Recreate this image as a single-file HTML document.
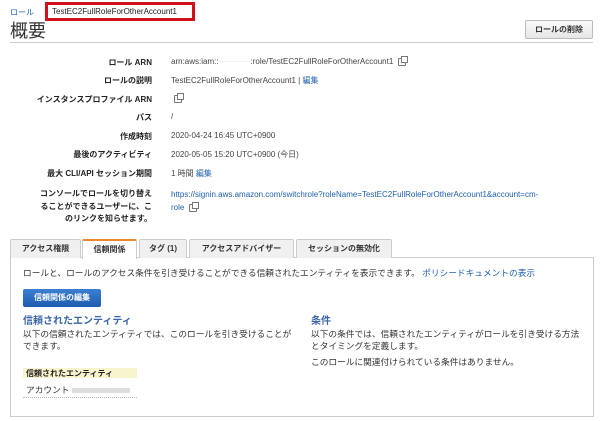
<!DOCTYPE html>
<html><head><meta charset="utf-8"><style>
*{margin:0;padding:0;box-sizing:border-box}
body{width:600px;height:421px;background:#fff;font-family:"Liberation Sans","Noto Sans CJK JP",sans-serif;font-size:8px;color:#333;position:relative;overflow:hidden}
.a{position:absolute;white-space:nowrap}
.lbl{position:absolute;right:448px;font-weight:bold;color:#222;text-align:right}
.val{position:absolute;left:171px;color:#444}
.link{color:#1f5fad}
.tab{position:absolute;top:239px;height:19px;border:1px solid #ccc;border-bottom:none;background:#f0f0f0;font-weight:bold;font-size:8px;color:#333;text-align:center;line-height:18px;border-radius:2px 2px 0 0}
.cp{display:inline-block;width:8px;height:8px;border:1px solid #777;border-radius:1px;vertical-align:middle;margin-left:5px;position:relative}
.cp:after{content:"";position:absolute;left:2px;top:-3px;width:5px;height:5px;border:1px solid #777;background:#fff}
.p{font-size:8.7px}
</style></head><body>
<div class="a link" style="left:10px;top:7px;font-size:8px">ロール</div>
<div class="a" style="left:45px;top:2px;width:150px;height:19px;border:3px solid #d0111b"></div>
<div class="a" style="left:52px;top:7px;color:#222">TestEC2FullRoleForOtherAccount1</div>
<div class="a" style="left:10px;top:17px;font-size:18px;color:#333">概要</div>
<div class="a" style="left:525px;top:20px;width:68px;height:19px;border:1px solid #bbb;border-radius:2px;background:linear-gradient(#fafafa,#e6e6e6);font-weight:bold;text-align:center;line-height:17px;color:#333">ロールの削除</div>
<div class="a" style="left:10px;top:42px;width:583px;height:1px;background:#ccc"></div>

<div class="lbl" style="top:57px">ロール ARN</div><div class="a val" style="top:57px">arn:aws:iam::<span style="color:#ccc">············</span>:role/TestEC2FullRoleForOtherAccount1<span class="cp"></span></div>
<div class="lbl" style="top:75px">ロールの説明</div><div class="a val" style="top:75px">TestEC2FullRoleForOtherAccount1 | <span class="link">編集</span></div>
<div class="lbl" style="top:94px">インスタンスプロファイル ARN</div><div class="a val" style="top:94px"><span class="cp" style="margin-left:3px"></span></div>
<div class="lbl" style="top:112px">パス</div><div class="a val" style="top:112px">/</div>
<div class="lbl" style="top:131px">作成時刻</div><div class="a val" style="top:131px">2020-04-24 16:45 UTC+0900</div>
<div class="lbl" style="top:149px">最後のアクティビティ</div><div class="a val" style="top:149px">2020-05-05 15:20 UTC+0900 (今日)</div>
<div class="lbl" style="top:168px">最大 CLI/API セッション期間</div><div class="a val" style="top:168px">1 時間 <span class="link">編集</span></div>
<div class="lbl" style="top:188px;line-height:12.5px">コンソールでロールを切り替え<br>ることができるユーザーに、こ<br>のリンクを知らせます。</div>
<div class="a val link" style="top:188px;line-height:13px">https://signin.aws.amazon.com/switchrole?roleName=TestEC2FullRoleForOtherAccount1&amp;account=cm-<br>role<span class="cp"></span></div>

<div class="a" style="left:10px;top:257px;width:584px;height:160px;border:1px solid #ccc"></div>
<div class="tab" style="left:10px;width:71px">アクセス権限</div>
<div class="tab" style="left:82px;width:55px;background:#fff;height:20px;border-top:2px solid #e8892e">信頼関係</div>
<div class="tab" style="left:139px;width:48px">タグ (1)</div>
<div class="tab" style="left:189px;width:105px">アクセスアドバイザー</div>
<div class="tab" style="left:296px;width:96px">セッションの無効化</div>

<div class="a p" style="left:23px;top:266px;color:#333">ロールと、ロールのアクセス条件を引き受けることができる信頼されたエンティティを表示できます。 <span class="link">ポリシードキュメントの表示</span></div>
<div class="a" style="left:23px;top:289px;width:78px;height:18px;border-radius:2px;background:linear-gradient(#3c7fd2,#1d5cb0);color:#fff;font-weight:bold;text-align:center;line-height:18px">信頼関係の編集</div>
<div class="a" style="left:23px;top:312px;font-size:10px;font-weight:bold;color:#3b67a8">信頼されたエンティティ</div>
<div class="a p" style="left:23px;top:329px;line-height:11.5px">以下の信頼されたエンティティでは、このロールを引き受けることが<br>できます。</div>
<div class="a" style="left:23px;top:368px;width:114px;height:10px;background:#f8f4cd"></div>
<div class="a" style="left:26px;top:368px;font-weight:bold;color:#222">信頼されたエンティティ</div>
<div class="a p" style="left:26px;top:383px">アカウント <span style="display:inline-block;width:58px;height:5px;background:#ddd;vertical-align:middle"></span></div>
<div class="a" style="left:23px;top:397px;width:114px;border-top:1px dotted #bbb"></div>

<div class="a" style="left:311px;top:312px;font-size:10px;font-weight:bold;color:#3b67a8">条件</div>
<div class="a p" style="left:311px;top:329px;line-height:11.5px">以下の条件では、信頼されたエンティティがロールを引き受ける方法<br>とタイミングを定義します。</div>
<div class="a p" style="left:311px;top:355px">このロールに関連付けられている条件はありません。</div>
</body></html>
